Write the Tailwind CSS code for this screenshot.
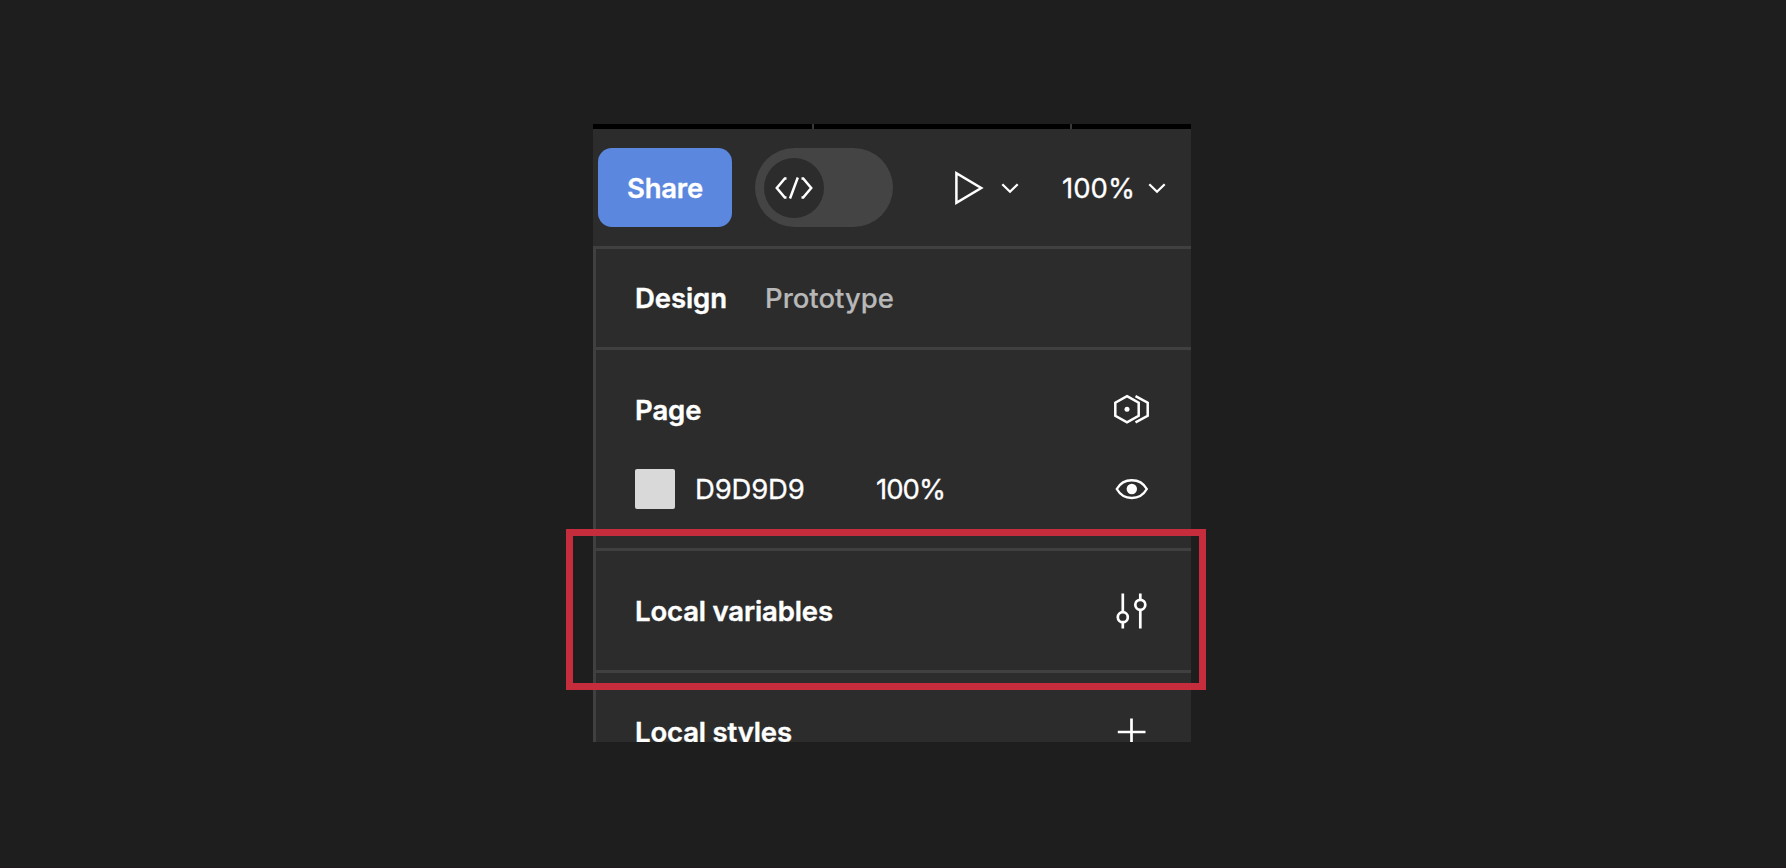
<!DOCTYPE html>
<html lang="en">
<head>
<meta charset="utf-8">
<title>Local variables</title>
<script src="https://cdn.jsdelivr.net/npm/@tailwindcss/browser@4"></script>
</head>
<body class="h-[868px] w-[1786px] overflow-hidden border-b border-[#1f181c] bg-[#1e1e1e] pt-[124px] pl-[593px] font-['Inter',sans-serif] text-[27.5px] text-white antialiased">
<main class="relative h-[618px] w-[598px]">
  <div class="flex h-full flex-col overflow-hidden bg-[#2c2c2c]">
    <div class="flex h-[5px] shrink-0 gap-[2px] bg-[#383838]">
      <div class="w-[219px] bg-black"></div>
      <div class="w-[256px] bg-black"></div>
      <div class="flex-1 bg-black"></div>
    </div>
    <header class="flex h-[120px] shrink-0 items-center border-b-[3px] border-[#404040] pl-[5px]">
      <button class="flex h-[79px] w-[134px] items-center justify-center rounded-[14px] bg-[#5b87de] font-semibold"><span class="pt-[2px] tracking-[-0.2px] [-webkit-text-stroke:0.3px_#fff]">Share</span></button>
      <div class="ml-[22.5px] flex h-[79px] w-[138.5px] items-center rounded-full bg-[#444444] pl-[9.5px]">
        <div class="flex size-[60px] items-center justify-center rounded-full bg-[#2c2c2c]">
          <svg class="h-[24px] w-[40px]" viewBox="0 0 40 24" fill="none" stroke="#fff" stroke-width="2.5"><path d="M12.500 2.500H10.800L2.800 12l8 9.500h1.700M16 22.500 23.800 1.500M27.500 2.500h1.700l8 9.500-8 9.500h-1.700"/></svg>
        </div>
      </div>
      <svg class="ml-[60px] h-[36px] w-[32px]" viewBox="0 0 32 36" fill="none" stroke="#fff" stroke-width="2.5"><path d="M3.400 3.200v29.600L28.200 18z"/></svg>
      <svg class="ml-[15px] h-[12px] w-[20px]" viewBox="0 0 20 12" fill="none" stroke="#fff" stroke-width="2.3"><path d="m2.300 2.200 7.700 7.500 7.700-7.500"/></svg>
      <span class="ml-[42px] w-[73px] pt-[2px] [-webkit-text-stroke:0.3px_#fff]">100%</span>
      <svg class="ml-[11.5px] h-[12px] w-[20px]" viewBox="0 0 20 12" fill="none" stroke="#fff" stroke-width="2.3"><path d="m2.300 2.200 7.700 7.500 7.700-7.500"/></svg>
    </header>
    <div class="flex flex-1 flex-col border-l-[3px] border-[#404040]">
      <nav class="flex h-[101px] shrink-0 items-center border-b-[3px] border-[#404040] pt-[2px] pl-[39px] font-semibold">
        <span class="w-[130px] tracking-[-0.1px] [-webkit-text-stroke:0.4px_#fff]">Design</span>
        <span class="font-medium text-[#b8b8b8] [-webkit-text-stroke:0.2px_#b8b8b8]">Prototype</span>
      </nav>
      <section class="h-[201px] shrink-0 border-b-[3px] border-[#404040] pt-[20px] pr-[40px] pl-[39px]">
        <div class="flex h-[79px] items-center justify-between">
          <h2 class="pt-[2px] font-semibold tracking-[-0.1px] [-webkit-text-stroke:0.4px_#fff]">Page</h2>
          <svg class="-mt-px h-[32px] w-[40px]" viewBox="0 0 40 32" fill="none" stroke="#fff" stroke-width="2.5"><path d="M16 3.200 27.700 9.700v13.100L16 29.300 4.300 22.800V9.700z"/><path d="m24.500 3.200 12.200 6.500v13.100l-12.200 6.500"/><circle cx="16" cy="16.200" r="2.500" fill="#fff" stroke="none"/></svg>
        </div>
        <div class="flex h-[80px] items-center">
          <div class="size-[40px] rounded-[2px] bg-[#d9d9d9]"></div>
          <span class="ml-[20px] w-[181px] pt-[2px] tracking-[-0.2px] [-webkit-text-stroke:0.3px_#fff]">D9D9D9</span>
          <span class="pt-[2px] tracking-[-1px] [-webkit-text-stroke:0.3px_#fff]">100%</span>
          <svg class="ml-auto h-[24px] w-[40px]" viewBox="0 0 40 24" fill="none" stroke="#fff" stroke-width="2.4"><path d="M5.800 12C9.500 5.500 14.800 3.200 20.800 3.200S32.100 5.500 35.800 12C32.100 18.500 26.800 21 20.800 21S9.500 18.500 5.800 12z"/><circle cx="20.800" cy="12" r="5.200" fill="#fff" stroke="none"/></svg>
        </div>
      </section>
      <section class="flex h-[122px] shrink-0 items-center justify-between border-b-[3px] border-[#404040] pr-[40px] pl-[39px]">
        <h2 class="pt-[2px] font-semibold tracking-[-0.15px] [-webkit-text-stroke:0.4px_#fff]">Local variables</h2>
        <svg class="h-[40px] w-[40px]" viewBox="0 0 40 40" fill="none" stroke="#fff" stroke-width="2.7"><path d="M11.800 2.500v18.300M11.800 31.500v6M29.300 2.500v6M29.300 19.300v18.200"/><circle cx="11.800" cy="26.200" r="5"/><circle cx="29.300" cy="13.800" r="5"/></svg>
      </section>
      <section class="flex h-[118px] shrink-0 items-center justify-between pr-[40px] pl-[39px]">
        <h2 class="pt-[2px] font-semibold tracking-[-0.15px] [-webkit-text-stroke:0.4px_#fff]">Local styles</h2>
        <svg class="h-[40px] w-[40px]" viewBox="0 0 40 40" fill="none" stroke="#fff" stroke-width="2.7"><path d="M6.800 20H34.500M20.500 6.500v27.500"/></svg>
      </section>
    </div>
  </div>
  <div class="absolute top-[405px] -left-[27px] h-[161px] w-[640px] border-[7px] border-[#c52d3d]"></div>
</main>
</body>
</html>
